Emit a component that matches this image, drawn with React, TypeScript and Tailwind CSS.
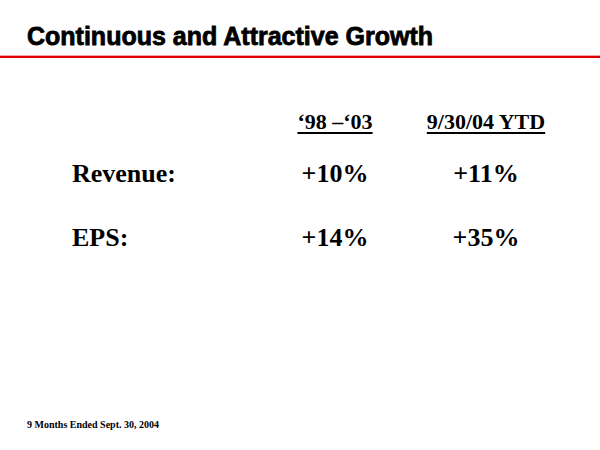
export default function App() {
  const rows = [
    { label: 'Revenue:', a: '+10%', b: '+11%' },
    { label: 'EPS:', a: '+14%', b: '+35%' },
  ]

  return (
    <div className="w-[600px] h-[450px] bg-white flex flex-col overflow-hidden">
      {/* Title */}
      <div className="pt-[22px] pl-[27px] h-[55px]">
        <h1
          className="text-[25px] leading-[28px] font-bold text-black"
          style={{ fontFamily: '"Liberation Sans", Arial, sans-serif', WebkitTextStroke: '0.8px black' }}
        >
          Continuous and Attractive Growth
        </h1>
      </div>
      <div className="h-[1px] bg-[#f2a4a4]" />
      <div className="h-[2px] bg-[#e00000]" />

      {/* Table */}
      <div
        className="flex flex-col pl-[72px] pt-[52px] text-black font-bold"
        style={{ fontFamily: '"Liberation Serif", "Times New Roman", serif' }}
      >
        <div className="flex h-[24px] text-[22px] leading-[24px]">
          <div className="w-[188px]" />
          <div className="w-[150px] text-center">
            <span className="underline decoration-2 underline-offset-[3px]">‘98 –‘03</span>
          </div>
          <div className="w-[152px] text-center">
            <span className="underline decoration-2 underline-offset-[3px]">9/30/04 YTD</span>
          </div>
        </div>

        <div className="flex flex-col gap-[32px] pt-[24px]">
          {rows.map((r, i) => (
            <div key={i} className="flex h-[32px] text-[26px] leading-[32px]">
              <div className="w-[188px]">{r.label}</div>
              <div className="w-[150px] text-center">{r.a}</div>
              <div className="w-[152px] text-center">{r.b}</div>
            </div>
          ))}
        </div>
      </div>

      {/* Footnote */}
      <div
        className="mt-auto mb-[19px] pl-[27px] text-[10px] leading-[12px] font-bold text-black"
        style={{ fontFamily: '"Liberation Serif", "Times New Roman", serif' }}
      >
        9 Months Ended Sept. 30, 2004
      </div>
    </div>
  )
}
